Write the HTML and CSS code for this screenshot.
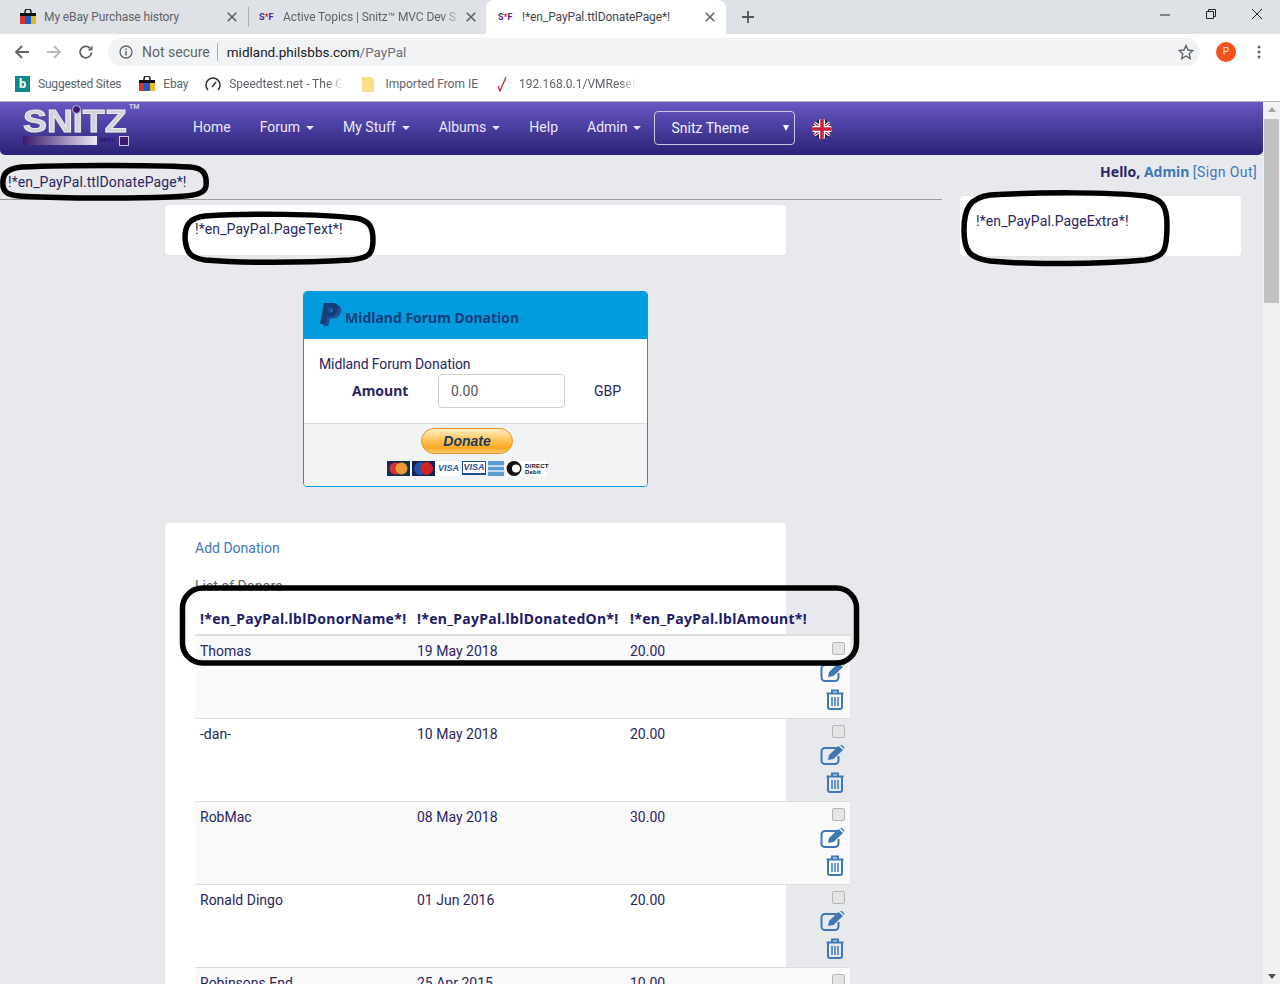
FILE: index.html
```html
<!DOCTYPE html>
<html lang="en">
<head>
    <meta charset="UTF-8">
    <title>!*en_PayPal.ttlDonatePage*!</title>
    <link rel="stylesheet" href="styles.css">
</head>
<body>

    <svg class="defs" width="0" height="0">
        <symbol id="bag" viewBox="0 0 16 16">
            <path d="M5 5V3a3 3 0 0 1 6 0v2" fill="none" stroke="#222" stroke-width="1.5"/>
            <rect x="0" y="4" width="16" height="3" fill="#111"/>
            <rect x="0" y="7" width="5" height="8" fill="#d9322b"/>
            <rect x="5" y="7" width="6" height="8" fill="#1b5fc4"/>
            <rect x="11" y="7" width="5" height="8" fill="#e9b61c"/>
        </symbol>
        <symbol id="close" viewBox="0 0 10 10">
            <path d="M.7.7l8.600 8.600M9.300.7L.7 9.300" stroke="#5a5d61" stroke-width="1.500"/>
        </symbol>
        <symbol id="edit" viewBox="0 0 25 20">
            <path d="M17 3H5a3.500 3.500 0 0 0-3.500 3.500v9A3.500 3.500 0 0 0 5 19h10a3.500 3.500 0 0 0 3.500-3.500V11" fill="none" stroke="#3f78b5" stroke-width="2"/>
            <path d="M8 15l1-5L18.500 1l4.500 4-9.500 9zM20 0l1.500-.5 3 3L24 4z" fill="#3f78b5"/>
        </symbol>
        <symbol id="trash" viewBox="0 0 18 21">
            <path d="M.5 4.500h17M6 4V1.500h6V4M2 5v13a2 2 0 0 0 2 2h10a2 2 0 0 0 2-2V5" fill="none" stroke="#3f78b5" stroke-width="2"/>
            <path d="M6 8v9M9 8v9M12 8v9" fill="none" stroke="#3f78b5" stroke-width="1.500"/>
        </symbol>
        <symbol id="pp" viewBox="0 0 19 22">
            <path fill-rule="evenodd" d="M4 0h8.500c4.500 0 6.500 2.500 5.500 6.500C17 11 14 13.500 9.500 13.500H7L5.500 21H0L4 0zM8 4.500L7.300 9.500h2.200c2 0 3-1 3.300-2.500.3-1.500-.5-2.500-2.300-2.500z"/>
        </symbol>
    </svg>

    <!-- browser frame -->
    <div class="tabstrip">
        <div class="tab">
            <svg class="favicon" width="16" height="16"><use href="#bag"/></svg>
            <span class="tab-title">My eBay Purchase history</span>
            <svg class="tab-close" width="10" height="10"><use href="#close"/></svg>
        </div>
        <div class="tab tab-second">
            <span class="snitz-icon">S<i>*</i>F</span>
            <span class="tab-title tab-fade">Active Topics | Snitz&trade; MVC Dev S</span>
            <svg class="tab-close" width="10" height="10"><use href="#close"/></svg>
        </div>
        <div class="tab tab-active">
            <span class="snitz-icon">S<i>*</i>F</span>
            <span class="tab-title">!*en_PayPal.ttlDonatePage*!</span>
            <svg class="tab-close" width="10" height="10"><use href="#close"/></svg>
        </div>
        <svg class="new-tab" width="14" height="14" viewBox="0 0 14 14"><path d="M7 1v12M1 7h12" stroke="#555" stroke-width="1.800"/></svg>
        <div class="window-controls">
            <svg width="12" height="12" viewBox="0 0 12 12"><path d="M1 7h10" stroke="#222" stroke-width="1"/></svg>
            <svg width="12" height="12" viewBox="0 0 12 12"><path d="M1.500 3.500h7v7h-7zM3.500 3.500v-2h7v7h-2" fill="none" stroke="#222" stroke-width="1"/></svg>
            <svg width="12" height="12" viewBox="0 0 12 12"><path d="M1 1l10 10M11 1L1 11" stroke="#222" stroke-width="1"/></svg>
        </div>
    </div>

    <div class="toolbar">
        <svg class="tool" width="16" height="16" viewBox="0 0 16 16"><path d="M15 8H2M8 2L2 8l6 6" fill="none" stroke="#5f6368" stroke-width="1.800"/></svg>
        <svg class="tool" width="16" height="16" viewBox="0 0 16 16"><path d="M1 8h13M8 2l6 6-6 6" fill="none" stroke="#b4b7bb" stroke-width="1.800"/></svg>
        <svg class="tool" width="16" height="16" viewBox="0 0 16 16"><path d="M13.500 8.500A5.700 5.700 0 1 1 11.800 4" fill="none" stroke="#5f6368" stroke-width="1.800"/><path d="M14.500 1.500v5h-5z" fill="#5f6368"/></svg>
        <div class="omnibox">
            <svg width="14" height="14" viewBox="0 0 14 14"><circle cx="7" cy="7" r="6" fill="none" stroke="#5f6368" stroke-width="1.300"/><path d="M7 6v4.500M7 3.500v1.500" stroke="#5f6368" stroke-width="1.400"/></svg>
            <span class="not-secure">Not secure</span>
            <span class="url">midland.philsbbs.com<span class="url-path">/PayPal</span></span>
            <svg class="star" width="16" height="16" viewBox="0 0 16 16"><path d="M8 1.500l2 4.500 4.800.5-3.600 3.200 1 4.800L8 12l-4.200 2.500 1-4.800L1.200 6.500 6 6z" fill="none" stroke="#5f6368" stroke-width="1.400"/></svg>
        </div>
        <span class="avatar">P</span>
        <svg class="menu-dots" width="4" height="16" viewBox="0 0 4 16"><circle cx="2" cy="3" r="1.500" fill="#5f6368"/><circle cx="2" cy="8" r="1.500" fill="#5f6368"/><circle cx="2" cy="13" r="1.500" fill="#5f6368"/></svg>
    </div>

    <div class="bookmarks">
        <span class="bookmark bm-sites"><b class="bing">b</b>Suggested Sites</span>
        <span class="bookmark bm-ebay"><svg width="16" height="16"><use href="#bag"/></svg>Ebay</span>
        <span class="bookmark bm-speed"><svg width="16" height="16" viewBox="0 0 16 16"><path d="M3 14a7 7 0 1 1 10 0" fill="none" stroke="#333" stroke-width="1.500"/><path d="M7 11l4-5" stroke="#333" stroke-width="1.500"/></svg><span class="bm-fade">Speedtest.net - The G</span></span>
        <span class="bookmark bm-ie"><svg width="12" height="15" viewBox="0 0 12 15"><path d="M0 0h9l3 3v12H0z" fill="#fbdf87"/></svg>Imported From IE</span>
        <span class="bookmark bm-vm"><svg width="10" height="16" viewBox="0 0 10 16"><path d="M1 10l2 5L9 1" fill="none" stroke="#cc2230" stroke-width="1.300"/></svg><span class="bm-fade">192.168.0.1/VMReset</span></span>
    </div>

    <!-- the page itself -->
    <div class="viewport">
        <div class="page">
            <nav class="navbar">
                <div class="logo">
                    <span class="logo-word">SNITZ</span>
                    <span class="logo-ball"></span>
                    <span class="logo-tm">TM</span>
                    <div class="logo-strip"><span class="logo-bar"></span><span class="logo-mvc">MVC</span><span class="logo-box"></span></div>
                </div>
                <ul class="nav-links">
                    <li>Home</li>
                    <li class="has-caret">Forum</li>
                    <li class="has-caret">My Stuff</li>
                    <li class="has-caret">Albums</li>
                    <li>Help</li>
                    <li class="has-caret">Admin</li>
                </ul>
                <div class="theme-select">Snitz Theme</div>
                <svg class="flag" width="20" height="20" viewBox="0 0 20 20">
                    <clipPath id="round"><circle cx="10" cy="10" r="10"/></clipPath>
                    <g clip-path="url(#round)">
                        <rect width="20" height="20" fill="#1f2a66"/>
                        <path d="M0 2l20 16M20 2L0 18" stroke="#fff" stroke-width="3.500"/>
                        <path d="M0 2l20 16M20 2L0 18" stroke="#c8203a" stroke-width="1.200"/>
                        <path d="M10 0v20M0 10h20" stroke="#fff" stroke-width="6"/>
                        <path d="M10 0v20M0 10h20" stroke="#c8203a" stroke-width="3.500"/>
                    </g>
                </svg>
            </nav>

            <div class="columns">
                <main class="main-col">
                    <h1 class="page-title">!*en_PayPal.ttlDonatePage*!</h1>

                    <section class="card card-text">!*en_PayPal.PageText*!</section>

                    <section class="paypal-card">
                        <div class="paypal-head">
                            <svg class="pp-mark" width="22" height="24" viewBox="0 0 22 24"><use href="#pp" width="19" height="22" x="3" y="2" fill="#1f4f96"/><use href="#pp" width="19" height="22" fill="#153d7a"/></svg>
                            <span>Midland Forum Donation</span>
                        </div>
                        <div class="paypal-body">
                            <div class="paypal-desc">Midland Forum Donation</div>
                            <div class="amount-row">
                                <label class="amount-label" for="amount">Amount</label>
                                <input class="amount-input" id="amount" type="text" value="0.00">
                                <span class="currency">GBP</span>
                            </div>
                        </div>
                        <div class="paypal-foot">
                            <div class="donate-wrap">
                                <button class="donate-btn">Donate</button>
                                <div class="pay-logos">
                                    <svg width="23" height="15" viewBox="0 0 23 15"><rect width="23" height="15" fill="#1c2a56"/><circle cx="8.500" cy="7.500" r="6" fill="#d3332d"/><circle cx="14.500" cy="7.500" r="6" fill="#e99a32"/></svg>
                                    <svg width="23" height="15" viewBox="0 0 23 15"><rect width="23" height="15" fill="#14204f"/><circle cx="8.500" cy="7.500" r="6.500" fill="#1656b0"/><circle cx="14.500" cy="7.500" r="6.500" fill="#c9252b"/></svg>
                                    <span class="logo-visa">VISA</span>
                                    <span class="logo-visa2">VISA</span>
                                    <svg width="16" height="15" viewBox="0 0 16 15"><rect width="16" height="15" fill="#5a9bd5"/><path d="M0 5h16M0 10h16" stroke="#e6f0fa" stroke-width="1.500"/></svg>
                                    <span class="logo-dd"><svg width="18" height="15" viewBox="0 0 18 15"><circle cx="8" cy="7.500" r="7.500" fill="#111"/><circle cx="10" cy="7.500" r="4" fill="#fff"/></svg><span>DIRECT<br>Debit</span></span>
                                </div>
                            </div>
                        </div>
                    </section>

                    <section class="card card-donors">
                        <a class="add-link" href="#">Add Donation</a>
                        <div class="list-label">List of Donors</div>
                        <table class="donor-table">
                            <thead>
                                <tr>
                                    <th class="col-name">!*en_PayPal.lblDonorName*!</th>
                                    <th class="col-date">!*en_PayPal.lblDonatedOn*!</th>
                                    <th class="col-amount">!*en_PayPal.lblAmount*!</th>
                                    <th class="col-tools"></th>
                                </tr>
                            </thead>
                            <tbody>
                                <tr>
                                    <td>Thomas</td><td>19 May 2018</td><td>20.00</td>
                                    <td class="tools"><span class="check"></span><svg class="icon-edit" width="25" height="20"><use href="#edit"/></svg><svg class="icon-trash" width="18" height="21"><use href="#trash"/></svg></td>
                                </tr>
                                <tr>
                                    <td>-dan-</td><td>10 May 2018</td><td>20.00</td>
                                    <td class="tools"><span class="check"></span><svg class="icon-edit" width="25" height="20"><use href="#edit"/></svg><svg class="icon-trash" width="18" height="21"><use href="#trash"/></svg></td>
                                </tr>
                                <tr>
                                    <td>RobMac</td><td>08 May 2018</td><td>30.00</td>
                                    <td class="tools"><span class="check"></span><svg class="icon-edit" width="25" height="20"><use href="#edit"/></svg><svg class="icon-trash" width="18" height="21"><use href="#trash"/></svg></td>
                                </tr>
                                <tr>
                                    <td>Ronald Dingo</td><td>01 Jun 2016</td><td>20.00</td>
                                    <td class="tools"><span class="check"></span><svg class="icon-edit" width="25" height="20"><use href="#edit"/></svg><svg class="icon-trash" width="18" height="21"><use href="#trash"/></svg></td>
                                </tr>
                                <tr>
                                    <td>Robinsons End</td><td>25 Apr 2015</td><td>10.00</td>
                                    <td class="tools"><span class="check"></span><svg class="icon-edit" width="25" height="20"><use href="#edit"/></svg><svg class="icon-trash" width="18" height="21"><use href="#trash"/></svg></td>
                                </tr>
                            </tbody>
                        </table>
                    </section>
                </main>

                <aside class="side-col">
                    <div class="hello"><b>Hello, <a href="#">Admin</a></b> <span class="sign-out">[Sign Out]</span></div>
                    <section class="card card-extra">!*en_PayPal.PageExtra*!</section>
                </aside>
            </div>
        </div>

        <div class="scrollbar">
            <span class="arrow-up"></span>
            <span class="thumb"></span>
            <span class="arrow-down"></span>
        </div>
    </div>

    <!-- marker rings somebody drew over the screenshot -->
    <svg class="rings" width="1280" height="984" viewBox="0 0 1280 984">
        <path d="M22 167C70 165 150 165 190 167C205 168 207 176 206 186C205 194 195 196 170 197C120 199 50 198 20 196C5 195 2 190 3 181C3 172 10 168 22 167Z"/>
        <path d="M205 216C250 213 320 214 355 218C370 220 373 228 373 240C373 255 368 258 350 260C300 263 240 263 205 260C190 258 186 252 185 238C185 224 190 218 205 216Z"/>
        <path d="M990 195C1040 192 1110 192 1145 196C1162 199 1167 205 1167 225C1167 250 1165 257 1145 260C1100 264 1030 265 990 261C970 258 964 252 964 230C964 208 970 198 990 195Z"/>
        <rect x="182.500" y="588" width="674" height="75" rx="20"/>
    </svg>

</body>
</html>
```

FILE: styles.css
```css
html, body {
    margin: 0;
    height: 984px;
    overflow: hidden;
}
body {
    position: relative;
    font-family: Roboto, Arial, sans-serif;
    font-size: 14px;
    background: #fff;
}
.defs { position: absolute; }
a { color: #3f78b5; text-decoration: none; }
b { font-family: "Noto Sans", Arial, sans-serif; }

/* Browser tabs */
.tabstrip {
    display: flex;
    align-items: center;
    height: 34px;
    background: #dee1e6;
}
.tab {
    display: flex;
    align-items: center;
    flex: none;
    width: 228px;
    height: 34px;
    padding-left: 20px;
    font-size: 12px;
    letter-spacing: -.1px;
    color: #5f6368;
}
.tab-second {
    width: 227px;
    height: 20px;
    padding-left: 10px;
    border-left: 1px solid #aaadb2;
}
.tab-active {
    width: 228px;
    padding-left: 12px;
    background: #fff;
    border-radius: 8px 8px 0 0;
    color: #45484c;
}
.favicon { margin-right: 8px; }
.snitz-icon {
    width: 16px;
    margin-right: 8px;
    font-size: 9px;
    font-weight: 700;
    color: #4b2a91;
    white-space: nowrap;
}
.snitz-icon i { color: #d2342d; font-style: normal; }
.tab-title {
    flex: 1;
    white-space: nowrap;
}
.tab-fade {
    -webkit-mask-image: linear-gradient(to right, #000 0, #000 160px, transparent 178px);
    mask-image: linear-gradient(to right, #000 0, #000 160px, transparent 178px);
}
.tab-close {
    flex: none;
    margin: 0 11px 0 6px;
}
.tab-second .tab-close { margin-right: 10px; }
.new-tab { margin-left: 15px; }
.window-controls {
    display: flex;
    gap: 34px;
    margin-left: auto;
    padding-right: 17px;
    margin-top: -6px;
}

/* Address bar */
.toolbar {
    display: flex;
    align-items: center;
    height: 33px;
    padding: 3px 0 0 14px;
    box-sizing: border-box;
    background: #fff;
}
.tool { margin-right: 16px; }
.omnibox {
    display: flex;
    align-items: center;
    flex: none;
    width: 1092px;
    height: 28px;
    margin-left: -2px;
    padding-left: 11px;
    box-sizing: border-box;
    background: #f1f3f4;
    border-radius: 14px;
}
.not-secure {
    margin-left: 9px;
    padding-right: 7px;
    border-right: 1px solid #a8abaf;
    font-size: 14px;
    color: #5f6368;
    line-height: 18px;
}
.url { margin-left: 9px; font-size: 13.500px; color: #202124; }
.url-path { color: #6b6f74; }
.star { margin-left: auto; margin-right: 6px; }
.avatar {
    width: 20px;
    height: 20px;
    margin-left: 16px;
    border-radius: 50%;
    background: #f4511e;
    color: #fde3d6;
    font-size: 10px;
    line-height: 20px;
    text-align: center;
}
.menu-dots { margin-left: 21px; }

/* Bookmarks */
.bookmarks {
    display: flex;
    align-items: center;
    height: 34px;
    border-bottom: 1px solid #b3b4b8;
    font-size: 12px;
    letter-spacing: -.2px;
    color: #5f6368;
}
.bookmark {
    display: flex;
    align-items: center;
    gap: 8px;
    white-space: nowrap;
}
.bm-sites { margin-left: 15px; }
.bing {
    width: 15px;
    height: 16px;
    background: #0f8a8a;
    color: #fff;
    font-size: 12px;
    line-height: 16px;
    text-align: center;
}
.bm-ebay { margin-left: 18px; }
.bm-speed { margin-left: 17px; }
.bm-speed .bm-fade { letter-spacing: 0; }
.bm-ie { margin-left: 19px; gap: 11px; }
.bm-ie { letter-spacing: 0; }
.bm-vm { margin-left: 19px; gap: 12px; letter-spacing: 0; }
.bm-fade {
    -webkit-mask-image: linear-gradient(to right, #000 86%, transparent);
    mask-image: linear-gradient(to right, #000 86%, transparent);
}

/* Page area */
.viewport {
    display: flex;
    height: 882px;
    overflow: hidden;
    background: #e8e9ed;
}
.page {
    width: 1263px;
    flex: none;
    color: #2a2660;
}
.scrollbar {
    display: flex;
    flex-direction: column;
    align-items: center;
    flex: 1;
    background: #f1f1f1;
}
.arrow-up, .arrow-down {
    width: 0;
    height: 0;
    border-left: 4px solid transparent;
    border-right: 4px solid transparent;
}
.arrow-up { margin-top: 5px; border-bottom: 5px solid #a3a3a3; }
.arrow-down { margin-top: auto; margin-bottom: 5px; border-top: 5px solid #505050; }
.thumb {
    width: 15px;
    height: 184px;
    margin-top: 7px;
    background: #c1c1c1;
}

/* Site navbar */
.navbar {
    display: flex;
    align-items: center;
    height: 53px;
    background: linear-gradient(#6858c4, #2a2276);
    border-radius: 0 0 5px 5px;
}
.logo {
    position: relative;
    width: 105px;
    margin-left: 23px;
    margin-top: -3px;
    line-height: 1;
}
.logo-word {
    display: block;
    height: 25px;
    font-family: "Liberation Sans", Arial, sans-serif;
    font-size: 32px;
    font-weight: 700;
    line-height: 24px;
    color: #d2d2d9;
    -webkit-text-stroke: 1px #ecedf1;
    text-shadow: 1px 1px 0 #55527c;
    transform: scaleX(1.120);
    transform-origin: left center;
}
.logo-ball {
    position: absolute;
    left: 49px;
    top: -4px;
    width: 9px;
    height: 9px;
    border-radius: 50%;
    background: #3b1a6e;
    border: 1px solid #c6bfe0;
    box-sizing: border-box;
}
.logo-tm {
    position: absolute;
    top: -5px;
    left: 106px;
    font-size: 7px;
    font-weight: 700;
    color: #d8d8e0;
}
.logo-strip {
    display: flex;
    align-items: center;
    height: 9px;
    margin-top: 2px;
}
.logo-bar {
    flex: none;
    width: 74px;
    height: 9px;
    background: linear-gradient(to right, #3b1a6e, #ece9f4);
}
.logo-mvc {
    flex: none;
    width: 22px;
    font-family: "Liberation Serif", serif;
    font-size: 7px;
    font-weight: 700;
    color: #2a1460;
    text-align: center;
}
.logo-box {
    flex: none;
    width: 8px;
    height: 8px;
    border: 1px solid #c9c4e3;
    background: #3b1a6e;
}
.nav-links {
    display: flex;
    gap: 29px;
    margin: 0 0 0 65px;
    padding: 0 0 4px;
    list-style: none;
    color: #e9e7f6;
    font-size: 14px;
}
.has-caret::after {
    content: "";
    display: inline-block;
    margin-left: 6px;
    vertical-align: middle;
    border-top: 4px solid #e9e7f6;
    border-left: 4px solid transparent;
    border-right: 4px solid transparent;
}
.theme-select {
    position: relative;
    width: 141px;
    height: 34px;
    margin: -2px 0 0 13px;
    padding-left: 16px;
    box-sizing: border-box;
    border: 1px solid #c9c5e6;
    border-radius: 4px;
    color: #f1f0fa;
    line-height: 33px;
}
.theme-select::after {
    content: "";
    position: absolute;
    right: 5px;
    top: 13px;
    border-top: 6px solid #fff;
    border-left: 3px solid transparent;
    border-right: 3px solid transparent;
}
.flag { margin-left: 17px; }

/* Content columns */
.columns { display: flex; }
.main-col { width: 942px; flex: none; }
.side-col { flex: 1; }
.page-title {
    height: 45px;
    margin: 0;
    padding: 17px 0 0 8px;
    box-sizing: border-box;
    border-bottom: 1px solid #9a9a9f;
    font-size: 14px;
    font-weight: 400;
    letter-spacing: .1px;
    line-height: 20px;
}
.card {
    background: #fff;
    border-radius: 3px;
    box-shadow: 0 0 1px rgba(0, 0, 0, .15);
}
.card-text {
    width: 621px;
    height: 50px;
    margin: 5px 0 0 165px;
    padding: 14px 30px 0;
    box-sizing: border-box;
    letter-spacing: .1px;
    line-height: 20px;
}
.hello {
    margin-top: 7px;
    padding-right: 6px;
    text-align: right;
    line-height: 20px;
}
.sign-out { color: #3f78b5; letter-spacing: .4px; }
.card-extra {
    width: 281px;
    height: 60px;
    margin: 14px 0 0 18px;
    padding: 15px 16px 0;
    box-sizing: border-box;
    letter-spacing: .1px;
    line-height: 20px;
}

/* PayPal box */
.paypal-card {
    width: 345px;
    height: 196px;
    margin: 36px 0 36px 303px;
    box-sizing: border-box;
    border: 1px solid #009cde;
    border-radius: 4px;
    overflow: hidden;
    background: #fff;
}
.paypal-head {
    display: flex;
    align-items: center;
    gap: 3px;
    height: 47px;
    padding-left: 16px;
    background: #009cde;
    color: #153d7a;
    font-family: "Noto Sans", Arial, sans-serif;
    font-weight: 700;
}
.paypal-head span { margin-top: 3px; }
.pp-mark { margin-top: -1px; }
.paypal-body {
    height: 85px;
    padding: 15px 15px 0;
    box-sizing: border-box;
    border-bottom: 1px solid #ddd;
}
.paypal-desc { letter-spacing: -.1px; line-height: 20px; }
.amount-row {
    display: flex;
    align-items: center;
}
.amount-label {
    width: 86px;
    margin-left: 33px;
    padding-bottom: 2px;
    font-family: "Noto Sans", Arial, sans-serif;
    font-weight: 700;
}
.amount-input {
    width: 127px;
    height: 34px;
    padding: 0 12px;
    box-sizing: border-box;
    border: 1px solid #ccc;
    border-radius: 4px;
    font-family: inherit;
    font-size: 14px;
    color: #555;
}
.currency { margin-left: 29px; }
.paypal-foot {
    height: 62px;
    padding: 4px 0 0 83px;
    box-sizing: border-box;
    background: #f2f3f5;
}
.donate-wrap {
    display: flex;
    flex-direction: column;
    align-items: center;
    width: 160px;
}
.donate-btn {
    width: 92px;
    height: 26px;
    padding: 0;
    border: 1px solid #e8912d;
    border-radius: 13px;
    background: linear-gradient(#fff0c8, #ffc45c 45%, #fba71f 80%, #ffd27a);
    color: #1d3a5c;
    font-family: "Liberation Sans", Arial, sans-serif;
    font-size: 14px;
    font-style: italic;
    font-weight: 700;
}
.pay-logos {
    display: flex;
    gap: 2px;
    height: 15px;
    margin-top: 7px;
}
.logo-visa {
    width: 23px;
    background: #fff;
    color: #1f5aa6;
    font: italic 700 9px/15px "Liberation Sans", Arial, sans-serif;
    text-align: center;
}
.logo-visa2 {
    width: 24px;
    height: 14px;
    border: 1px solid #1f4f92;
    border-bottom-width: 2px;
    box-sizing: border-box;
    background: #fff;
    color: #1f4f92;
    font: italic 700 9px/11px "Liberation Sans", Arial, sans-serif;
    text-align: center;
}
.logo-dd {
    display: flex;
    width: 41px;
    background: #fff;
    color: #111;
    font: 700 6px/6px "Liberation Sans", Arial, sans-serif;
    letter-spacing: .2px;
}
.logo-dd svg { flex: none; }
.logo-dd span { padding-top: 2px; margin-left: 1px; }

/* Donor list */
.card-donors {
    width: 621px;
    height: 600px;
    margin-left: 165px;
    padding: 15px 30px 0;
    box-sizing: border-box;
}
.add-link { display: block; line-height: 20px; }
.list-label {
    margin-top: 18px;
    color: #666;
    line-height: 20px;
}
.donor-table {
    width: 655px;
    margin-top: 9px;
    border-collapse: collapse;
    table-layout: fixed;
}
.col-name { width: 217px; }
.col-date { width: 213px; }
.col-amount { width: 190px; }
.donor-table th {
    height: 28px;
    padding: 4px 0 6px 5px;
    box-sizing: border-box;
    border-bottom: 2px solid #ddd;
    font-family: "Noto Sans", Arial, sans-serif;
    font-size: 14px;
    font-weight: 700;
    letter-spacing: .3px;
    text-align: left;
    white-space: nowrap;
    color: #201c66;
}
.donor-table td {
    height: 83px;
    padding: 5px;
    box-sizing: border-box;
    border-top: 1px solid #ddd;
    vertical-align: top;
    line-height: 20px;
}
.donor-table tbody tr:first-child td { border-top: 0; }
.donor-table tbody tr:nth-child(odd) { background: #f9f9f9; }
.donor-table td.tools {
    position: relative;
    padding: 0;
}
.check {
    position: absolute;
    left: 17px;
    top: 6px;
    width: 13px;
    height: 13px;
    box-sizing: border-box;
    border: 1px solid #b5b5b5;
    border-radius: 2px;
    background: #e4e4e4;
}
.icon-edit, .icon-trash { position: absolute; }
.icon-edit { left: 5px; top: 26px; }
.icon-trash { left: 11px; top: 53px; }

/* Rings */
.rings {
    position: absolute;
    left: 0;
    top: 0;
    pointer-events: none;
}
.rings path, .rings rect {
    fill: none;
    stroke: #000;
    stroke-width: 5.500;
}
```
